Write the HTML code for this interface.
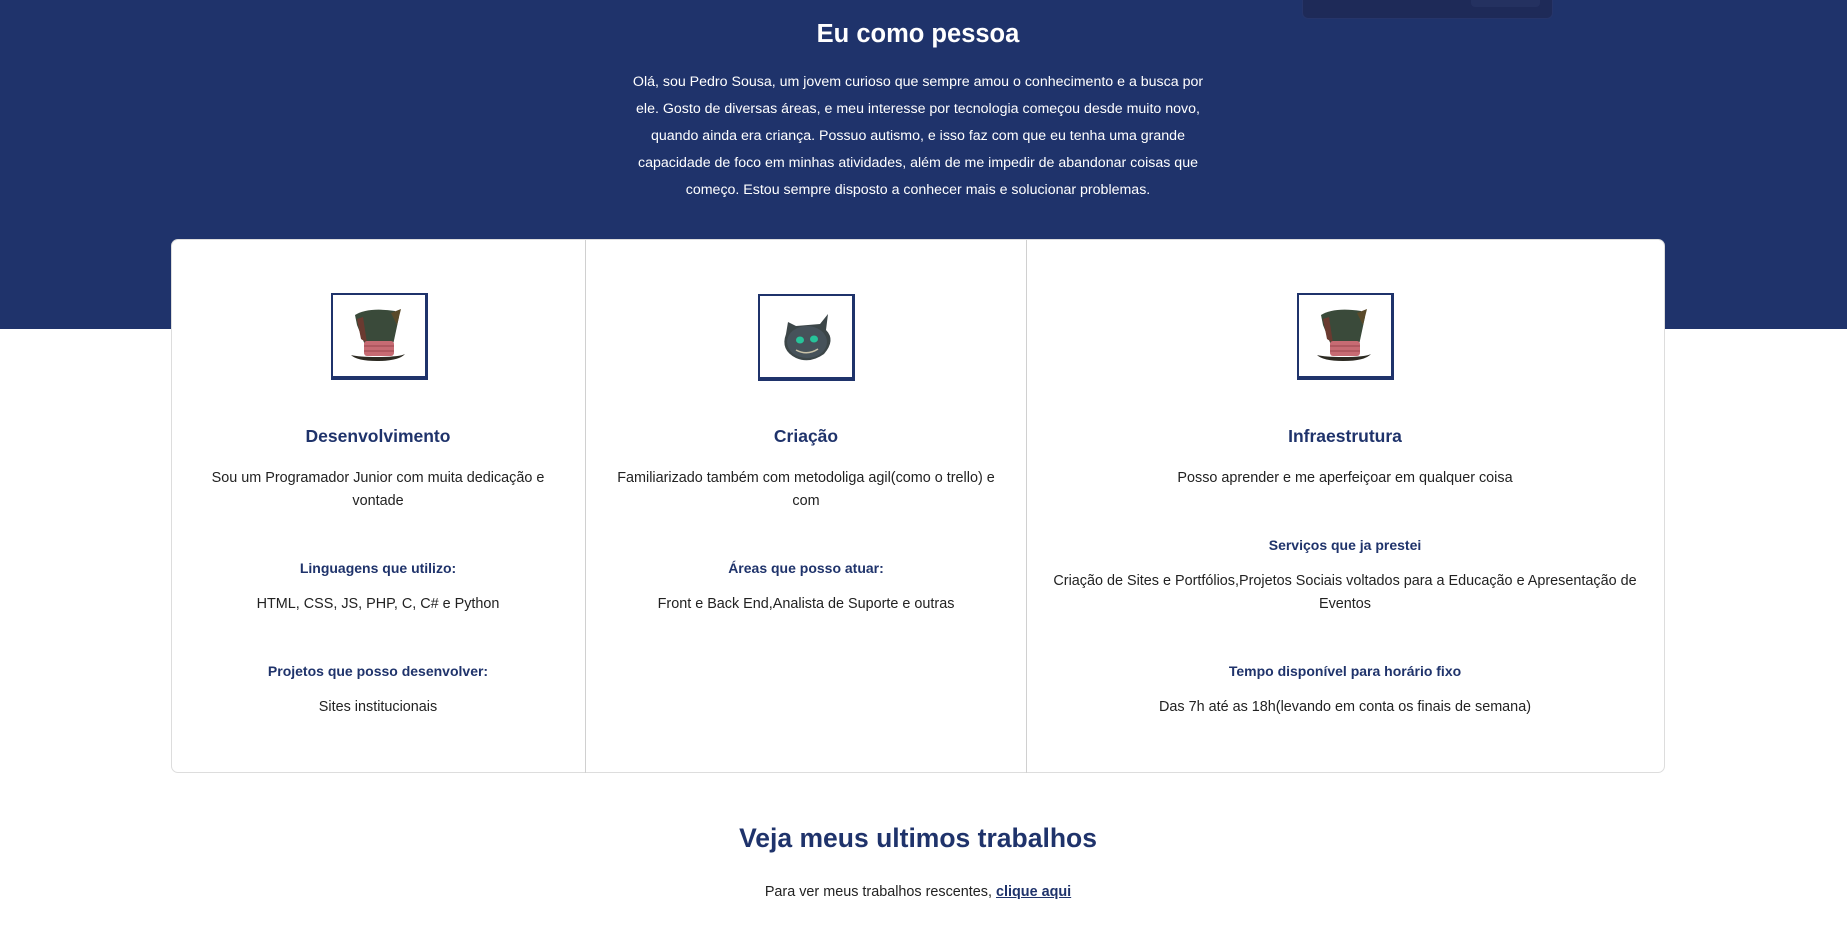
<!DOCTYPE html>
<html><head><meta charset="utf-8"><style>
*{margin:0;padding:0;box-sizing:border-box}
body{width:1847px;height:927px;background:#fff;font-family:"Liberation Sans",sans-serif;color:#222;position:relative;overflow:hidden}
.hero{position:absolute;left:0;top:0;width:1847px;height:329px;background:#1f336b}
.box{position:absolute;left:1302px;top:-6px;width:251px;height:25px;background:#1e2a58;border-radius:6px;border:1px solid #26356a}
.box i{position:absolute;left:168px;top:0;width:69px;height:12px;background:#243160;border-radius:4px}
.c{position:absolute;text-align:center;white-space:nowrap;transform:translateX(-50%)}
h1{font-size:25.5px;font-weight:bold;color:#fff;line-height:34px}
.intro{color:#fff;font-size:14.2px;line-height:27px}
.card{position:absolute;left:171px;top:239px;width:1494px;height:534px;background:#fff;border:1px solid #ddd;border-radius:7px}
.div{position:absolute;top:240px;width:1px;height:533px;background:#d0d0d0}
.img{position:absolute;width:97px;height:87px;border:2px solid #1f336b;border-right-width:3px;border-bottom-width:4px;background:#fff}
h3{font-size:17.5px;font-weight:bold;color:#1f336b;line-height:24px}
.t{font-size:14.4px;line-height:23px;color:#222}
.s{font-size:14px;font-weight:bold;color:#1f336b;line-height:20px}
h2{font-size:26.5px;font-weight:bold;color:#1f336b;line-height:34px}
a{color:#1f336b;font-weight:bold;text-decoration:underline}
</style></head><body>
<div class="hero"></div>
<div class="box"><i></i></div>
<div class="c" style="left:918px;top:17px"><h1>Eu como pessoa</h1></div>
<div class="c intro" style="left:918px;top:69px">Olá, sou Pedro Sousa, um jovem curioso que sempre amou o conhecimento e a busca por<br>ele. Gosto de diversas áreas, e meu interesse por tecnologia começou desde muito novo,<br>quando ainda era criança. Possuo autismo, e isso faz com que eu tenha uma grande<br>capacidade de foco em minhas atividades, além de me impedir de abandonar coisas que<br>começo. Estou sempre disposto a conhecer mais e solucionar problemas.</div>

<div class="card"></div>
<div class="div" style="left:585px"></div>
<div class="div" style="left:1026px"></div>

<svg width="0" height="0" style="position:absolute"><defs>
<g id="hat">
<path d="M22 20 Q35 12 62 16 L66 22 L60 50 L32 50 L24 30 Z" fill="#3a4a3a"/>
<path d="M24 24 L30 22 L34 48 L28 44 Z" fill="#6a3a30"/>
<path d="M58 18 L68 14 L64 30 Z" fill="#5a4a2a"/>
<rect x="31" y="46" width="30" height="15" rx="3" fill="#c76b73"/>
<path d="M31 51 L61 51 M31 56 L61 56" stroke="#a24c55" stroke-width="1.2"/>
<path d="M18 60 Q24 66 44 66 Q66 66 72 59 Q66 62 44 62 Q26 62 18 60 Z" fill="#2c2a22"/>
</g></defs></svg>

<div class="img" style="left:331px;top:293px"><svg width="92" height="81" viewBox="0 0 92 81"><use href="#hat" x="0" y="0"/></svg></div>
<div class="img" style="left:758px;top:294px"><svg width="92" height="81" viewBox="0 0 92 81">
<path d="M28 26 L36 30 L60 28 L68 18 L66 34 Q76 44 64 58 Q50 68 36 62 Q20 54 26 38 Z" fill="#3c4648"/>
<ellipse cx="47" cy="46" rx="20" ry="16" fill="#46525a"/>
<ellipse cx="40" cy="44" rx="4" ry="3.5" fill="#27c49a"/><ellipse cx="54" cy="43" rx="4" ry="3.5" fill="#27c49a"/>
<path d="M36 54 Q47 60 58 53" stroke="#c9c2a8" stroke-width="1.5" fill="none"/>
</svg></div>
<div class="img" style="left:1297px;top:293px"><svg width="92" height="81" viewBox="0 0 92 81"><use href="#hat" x="0" y="0"/></svg></div>

<div class="c" style="left:378px;top:424px"><h3>Desenvolvimento</h3></div>
<div class="c t" style="left:378px;top:467px">Sou um Programador Junior com muita dedicação e<br>vontade</div>
<div class="c s" style="left:378px;top:558px">Linguagens que utilizo:</div>
<div class="c t" style="left:378px;top:593px">HTML, CSS, JS, PHP, C, C# e Python</div>
<div class="c s" style="left:378px;top:661px">Projetos que posso desenvolver:</div>
<div class="c t" style="left:378px;top:696px">Sites institucionais</div>

<div class="c" style="left:806px;top:424px"><h3>Criação</h3></div>
<div class="c t" style="left:806px;top:467px">Familiarizado também com metodoliga agil(como o trello) e<br>com</div>
<div class="c s" style="left:806px;top:558px">Áreas que posso atuar:</div>
<div class="c t" style="left:806px;top:593px">Front e Back End,Analista de Suporte e outras</div>

<div class="c" style="left:1345px;top:424px"><h3>Infraestrutura</h3></div>
<div class="c t" style="left:1345px;top:467px">Posso aprender e me aperfeiçoar em qualquer coisa</div>
<div class="c s" style="left:1345px;top:535px">Serviços que ja prestei</div>
<div class="c t" style="left:1345px;top:570px">Criação de Sites e Portfólios,Projetos Sociais voltados para a Educação e Apresentação de<br>Eventos</div>
<div class="c s" style="left:1345px;top:661px">Tempo disponível para horário fixo</div>
<div class="c t" style="left:1345px;top:696px">Das 7h até as 18h(levando em conta os finais de semana)</div>

<div class="c" style="left:918px;top:821px"><h2>Veja meus ultimos trabalhos</h2></div>
<div class="c t" style="left:918px;top:881px">Para ver meus trabalhos rescentes, <a>clique aqui</a></div>
</body></html>
